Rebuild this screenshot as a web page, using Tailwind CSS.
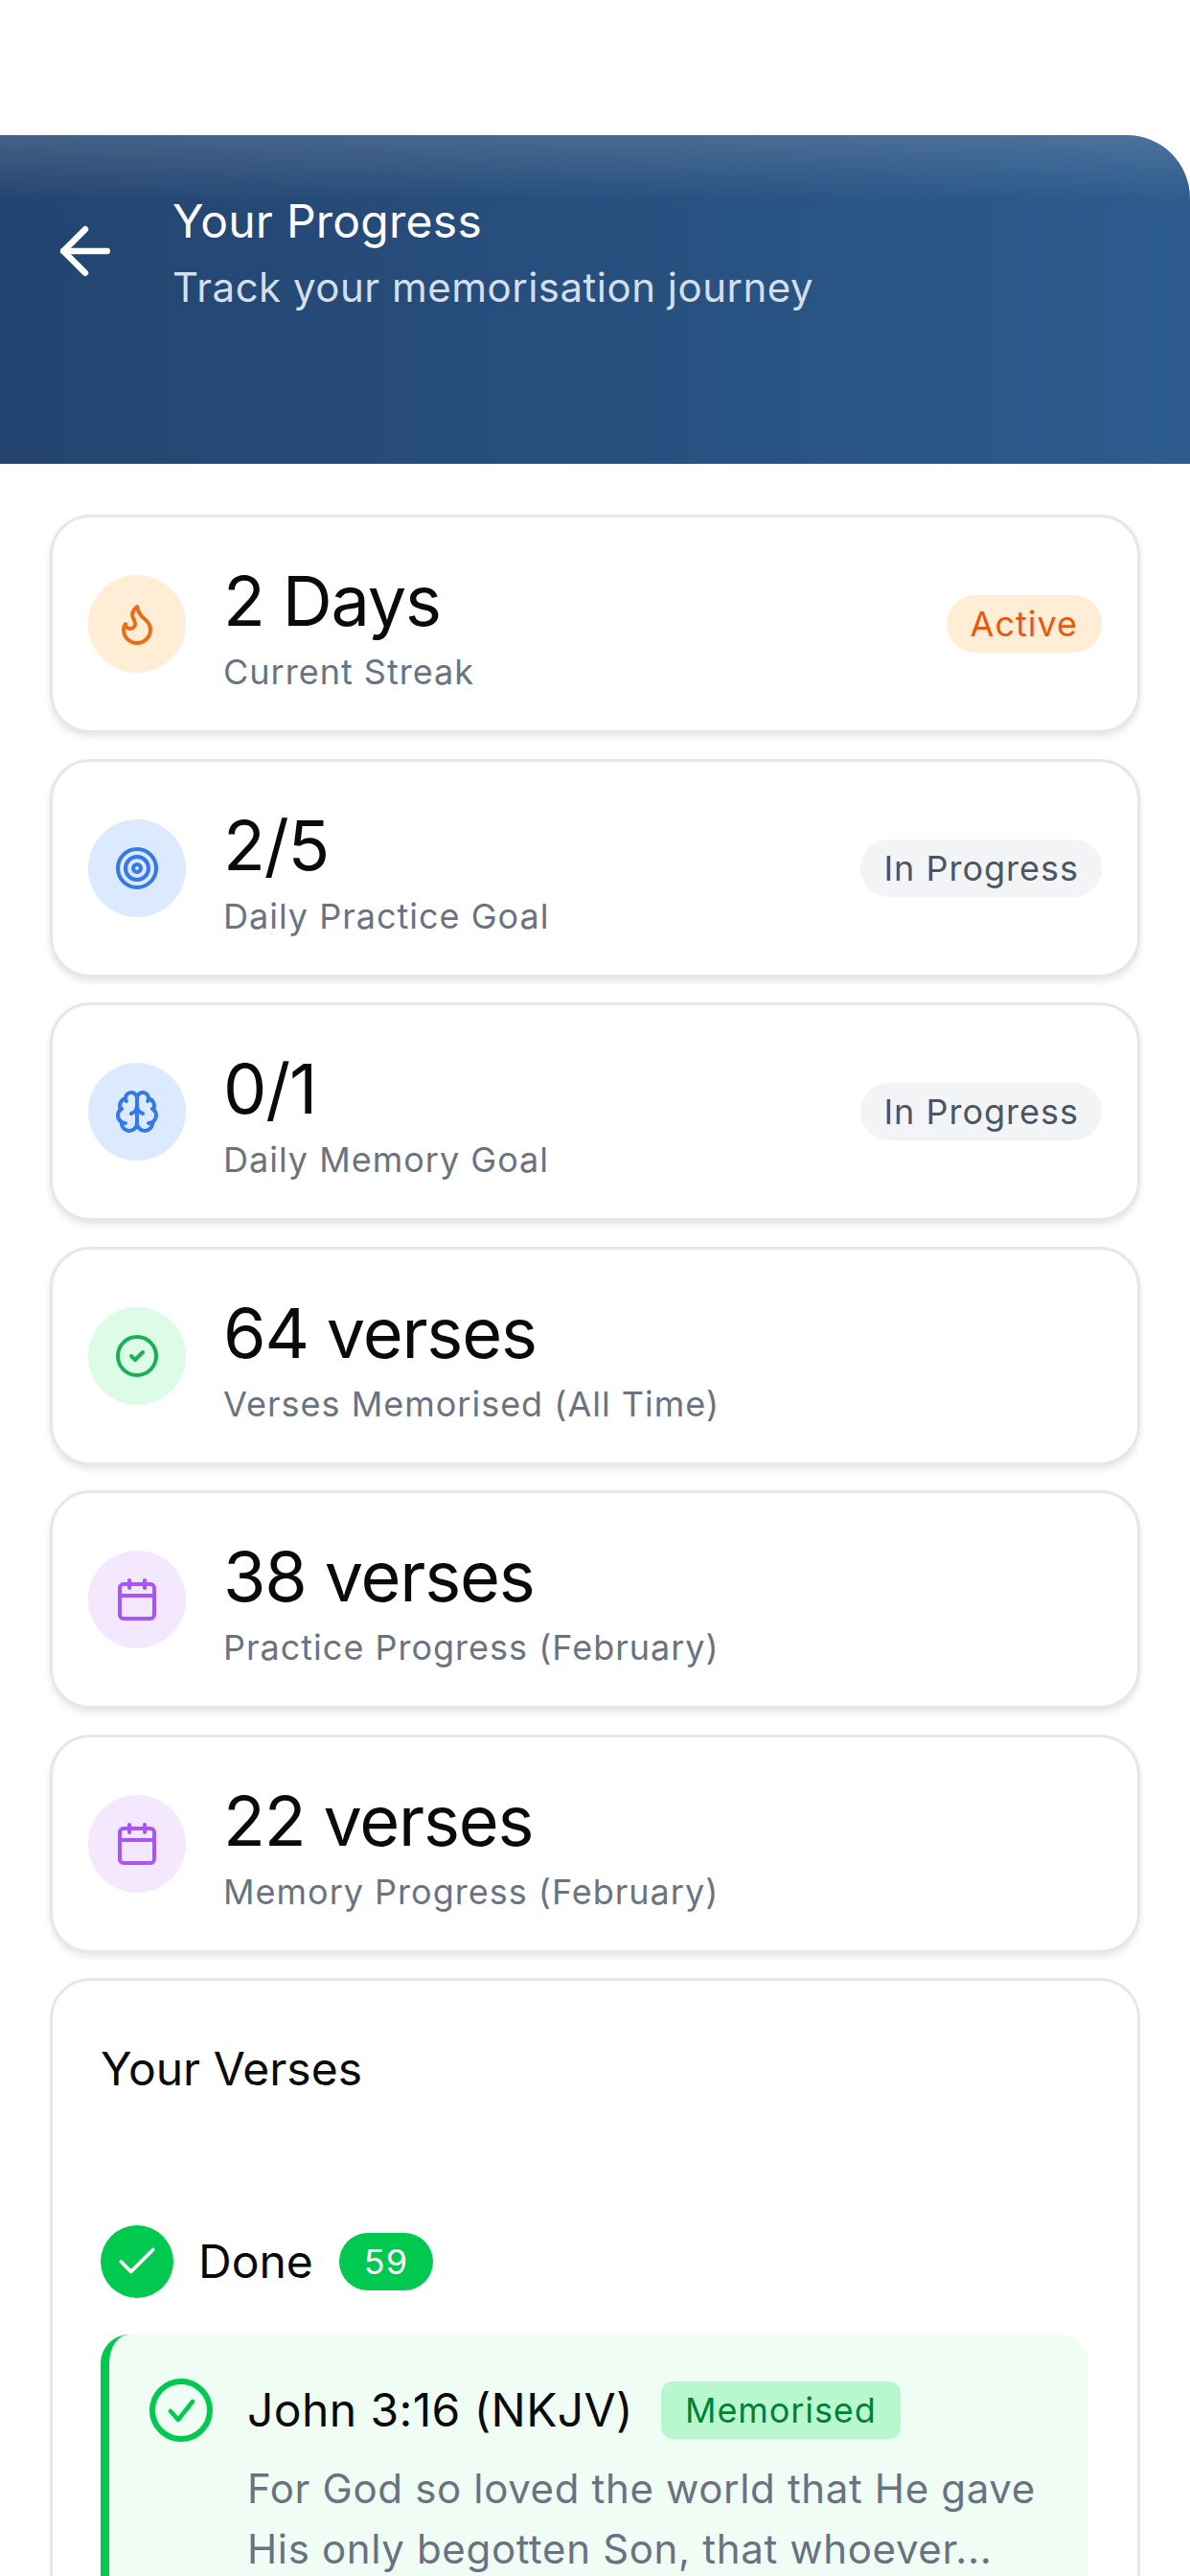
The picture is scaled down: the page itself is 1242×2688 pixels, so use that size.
<!DOCTYPE html>
<html lang="en" class="overflow-hidden">
<head>
    <meta charset="UTF-8">
    <title>Your Progress</title>
    <script src="https://cdn.jsdelivr.net/npm/@tailwindcss/browser@4"></script>
</head>
<body class="bg-white font-['Inter',sans-serif] w-[1242px] h-[2688px] overflow-hidden">
    <!-- Header -->
    <div class="mt-[141px] h-[343px] rounded-tr-[66px] bg-gradient-to-r from-[#234470] to-[#2c5b8d] flex items-start gap-[52px] pl-[50px] pt-[60px] relative overflow-hidden">
        <div class="absolute inset-x-0 top-0 h-[70px] bg-gradient-to-b from-white/15 to-transparent"></div>
        <svg class="w-[78px] h-[78px] mt-[22px] shrink-0" viewBox="0 0 24 24" fill="none" stroke="#fff" stroke-width="2" stroke-linecap="round" stroke-linejoin="round"><path d="M12 19l-7-7 7-7"/><path d="M19 12H5"/></svg>
        <div>
            <h1 class="text-[48px] leading-[60px] tracking-[0.25px] text-white">Your Progress</h1>
            <p class="text-[42px] leading-[60px] mt-[9px] tracking-[0.5px] text-[#d4dfee]">Track your memorisation journey</p>
        </div>
    </div>

    <main class="px-[52px] pt-[53px] flex flex-col gap-[26.5px]">
        <!-- Streak -->
        <div class="h-[228px] rounded-[42px] border-[3px] border-[#e5e7eb] bg-white shadow-[0_4px_7px_rgba(0,0,0,0.1)] flex items-center px-[37px]">
            <div class="w-[102px] h-[102px] rounded-full bg-[#ffedd5] flex items-center justify-center shrink-0">
                <svg class="w-[48px] h-[48px]" viewBox="0 0 24 24" fill="none" stroke="#ea6c17" stroke-width="2" stroke-linecap="round" stroke-linejoin="round"><path d="M8.5 14.5A2.5 2.5 0 0 0 11 12c0-1.38-.5-2-1-3-1.072-2.143-.224-4.054 2-6 .5 2.5 2 4.9 4 6.5 2 1.6 3 3.5 3 5.5a7 7 0 1 1-14 0c0-1.153.433-2.294 1-3a2.5 2.5 0 0 0 2.5 2.5z"/></svg>
            </div>
            <div class="ml-[39px] flex-1 pt-[8px]">
                <div class="text-[72px] leading-[80px] tracking-[-1.2px] text-[#0a0a0a]">2 Days</div>
                <div class="mt-[12px] text-[36px] leading-[44px] tracking-[1px] text-[#6b7280]">Current Streak</div>
            </div>
            <span class="rounded-full bg-[#ffedd5] text-[#ea580c] text-[36px] leading-[60px] tracking-[1px] px-[25px]">Active</span>
        </div>

        <!-- Practice goal -->
        <div class="h-[228px] rounded-[42px] border-[3px] border-[#e5e7eb] bg-white shadow-[0_4px_7px_rgba(0,0,0,0.1)] flex items-center px-[37px]">
            <div class="w-[102px] h-[102px] rounded-full bg-[#dbeafe] flex items-center justify-center shrink-0">
                <svg class="w-[48px] h-[48px]" viewBox="0 0 24 24" fill="none" stroke="#3578ea" stroke-width="2" stroke-linecap="round" stroke-linejoin="round"><circle cx="12" cy="12" r="10"/><circle cx="12" cy="12" r="6"/><circle cx="12" cy="12" r="2"/></svg>
            </div>
            <div class="ml-[39px] flex-1 pt-[8px]">
                <div class="text-[72px] leading-[80px] tracking-[-1.2px] text-[#0a0a0a]">2/5</div>
                <div class="mt-[12px] text-[36px] leading-[44px] tracking-[1px] text-[#6b7280]">Daily Practice Goal</div>
            </div>
            <span class="rounded-full bg-[#f3f4f6] text-[#4b5563] text-[36px] leading-[60px] tracking-[1px] px-[24px]">In Progress</span>
        </div>

        <!-- Memory goal -->
        <div class="h-[228px] rounded-[42px] border-[3px] border-[#e5e7eb] bg-white shadow-[0_4px_7px_rgba(0,0,0,0.1)] flex items-center px-[37px]">
            <div class="w-[102px] h-[102px] rounded-full bg-[#dbeafe] flex items-center justify-center shrink-0">
                <svg class="w-[48px] h-[48px]" viewBox="0 0 24 24" fill="none" stroke="#3578ea" stroke-width="2" stroke-linecap="round" stroke-linejoin="round"><path d="M12 5a3 3 0 1 0-5.997.125 4 4 0 0 0-2.526 5.77 4 4 0 0 0 .556 6.588A4 4 0 1 0 12 18Z"/><path d="M12 5a3 3 0 1 1 5.997.125 4 4 0 0 1 2.526 5.77 4 4 0 0 1-.556 6.588A4 4 0 1 1 12 18Z"/><path d="M15 13a4.5 4.5 0 0 1-3-4 4.5 4.5 0 0 1-3 4"/><path d="M17.599 6.5a3 3 0 0 0 .399-1.375"/><path d="M6.003 5.125A3 3 0 0 0 6.401 6.5"/><path d="M3.477 10.896a4 4 0 0 1 .585-.396"/><path d="M19.938 10.5a4 4 0 0 1 .585.396"/><path d="M6 18a4 4 0 0 1-1.967-.516"/><path d="M19.967 17.484A4 4 0 0 1 18 18"/></svg>
            </div>
            <div class="ml-[39px] flex-1 pt-[8px]">
                <div class="text-[72px] leading-[80px] tracking-[-1.2px] text-[#0a0a0a]">0/1</div>
                <div class="mt-[12px] text-[36px] leading-[44px] tracking-[1px] text-[#6b7280]">Daily Memory Goal</div>
            </div>
            <span class="rounded-full bg-[#f3f4f6] text-[#4b5563] text-[36px] leading-[60px] tracking-[1px] px-[24px]">In Progress</span>
        </div>

        <!-- Memorised -->
        <div class="h-[228px] rounded-[42px] border-[3px] border-[#e5e7eb] bg-white shadow-[0_4px_7px_rgba(0,0,0,0.1)] flex items-center px-[37px]">
            <div class="w-[102px] h-[102px] rounded-full bg-[#dcfce7] flex items-center justify-center shrink-0">
                <svg class="w-[48px] h-[48px]" viewBox="0 0 24 24" fill="none" stroke="#1bb055" stroke-width="2" stroke-linecap="round" stroke-linejoin="round"><circle cx="12" cy="12" r="10"/><path d="m9 12 2 2 4-4"/></svg>
            </div>
            <div class="ml-[39px] flex-1 pt-[8px]">
                <div class="text-[72px] leading-[80px] tracking-[-1.2px] text-[#0a0a0a]">64 verses</div>
                <div class="mt-[12px] text-[36px] leading-[44px] tracking-[1px] text-[#6b7280]">Verses Memorised (All Time)</div>
            </div>
        </div>

        <!-- Practice progress -->
        <div class="h-[228px] rounded-[42px] border-[3px] border-[#e5e7eb] bg-white shadow-[0_4px_7px_rgba(0,0,0,0.1)] flex items-center px-[37px]">
            <div class="w-[102px] h-[102px] rounded-full bg-[#f3e8ff] flex items-center justify-center shrink-0">
                <svg class="w-[48px] h-[48px]" viewBox="0 0 24 24" fill="none" stroke="#a855f7" stroke-width="2" stroke-linecap="round" stroke-linejoin="round"><path d="M8 2v4"/><path d="M16 2v4"/><rect x="3" y="4" width="18" height="18" rx="2"/><path d="M3 10h18"/></svg>
            </div>
            <div class="ml-[39px] flex-1 pt-[8px]">
                <div class="text-[72px] leading-[80px] tracking-[-1.2px] text-[#0a0a0a]">38 verses</div>
                <div class="mt-[12px] text-[36px] leading-[44px] tracking-[1px] text-[#6b7280]">Practice Progress (February)</div>
            </div>
        </div>

        <!-- Memory progress -->
        <div class="h-[228px] rounded-[42px] border-[3px] border-[#e5e7eb] bg-white shadow-[0_4px_7px_rgba(0,0,0,0.1)] flex items-center px-[37px]">
            <div class="w-[102px] h-[102px] rounded-full bg-[#f3e8ff] flex items-center justify-center shrink-0">
                <svg class="w-[48px] h-[48px]" viewBox="0 0 24 24" fill="none" stroke="#a855f7" stroke-width="2" stroke-linecap="round" stroke-linejoin="round"><path d="M8 2v4"/><path d="M16 2v4"/><rect x="3" y="4" width="18" height="18" rx="2"/><path d="M3 10h18"/></svg>
            </div>
            <div class="ml-[39px] flex-1 pt-[8px]">
                <div class="text-[72px] leading-[80px] tracking-[-1.2px] text-[#0a0a0a]">22 verses</div>
                <div class="mt-[12px] text-[36px] leading-[44px] tracking-[1px] text-[#6b7280]">Memory Progress (February)</div>
            </div>
        </div>

        <!-- Your verses -->
        <div class="rounded-[42px] border-[3px] border-[#e5e7eb] bg-white px-[50px] pt-[62px] h-[800px]">
            <h2 class="text-[48px] leading-[60px] text-[#0a0a0a]">Your Verses</h2>
            <div class="flex items-center mt-[133px]">
                <div class="w-[76px] h-[76px] rounded-full bg-[#00c950] flex items-center justify-center shrink-0">
                    <svg class="w-[50px] h-[50px]" viewBox="0 0 24 24" fill="none" stroke="#fff" stroke-width="1.8" stroke-linecap="round" stroke-linejoin="round"><path d="M20 6 9 17l-5-5"/></svg>
                </div>
                <span class="ml-[26px] text-[48px] leading-[60px] text-[#0a0a0a]">Done</span>
                <span class="ml-[27px] rounded-full bg-[#00c950] text-white text-[36px] leading-[60px] tracking-[1px] px-[26px]">59</span>
            </div>
            <div class="mt-[38px] w-[1031px] h-[400px] rounded-[30px] border-l-[9px] border-[#00c950] bg-[#f0fdf4] flex pl-[39px] pt-[43px]">
                <svg class="w-[72px] h-[72px] shrink-0" viewBox="0 0 24 24" fill="none" stroke="#00c950" stroke-width="2" stroke-linecap="round" stroke-linejoin="round"><circle cx="12" cy="12" r="10"/><path stroke-width="1.5" d="M8.3 12.3l2.7 3 5-6.3"/></svg>
                <div class="ml-[33px]">
                    <div class="flex items-center mt-[6px]">
                        <span class="text-[48px] leading-[60px] tracking-[0.4px] text-[#0a0a0a]">John 3:16 (NKJV)</span>
                        <span class="ml-[29px] rounded-[12px] bg-[#b9f8cf] text-[#008236] text-[36px] leading-[60px] tracking-[0.9px] px-[25px]">Memorised</span>
                    </div>
                    <p class="mt-[20px] w-[860px] text-[42px] leading-[63px] tracking-[0.65px] text-[#6a7282]">For God so loved the world that He gave His only begotten Son, that whoever...</p>
                </div>
            </div>
        </div>
    </main>
</body>
</html>
